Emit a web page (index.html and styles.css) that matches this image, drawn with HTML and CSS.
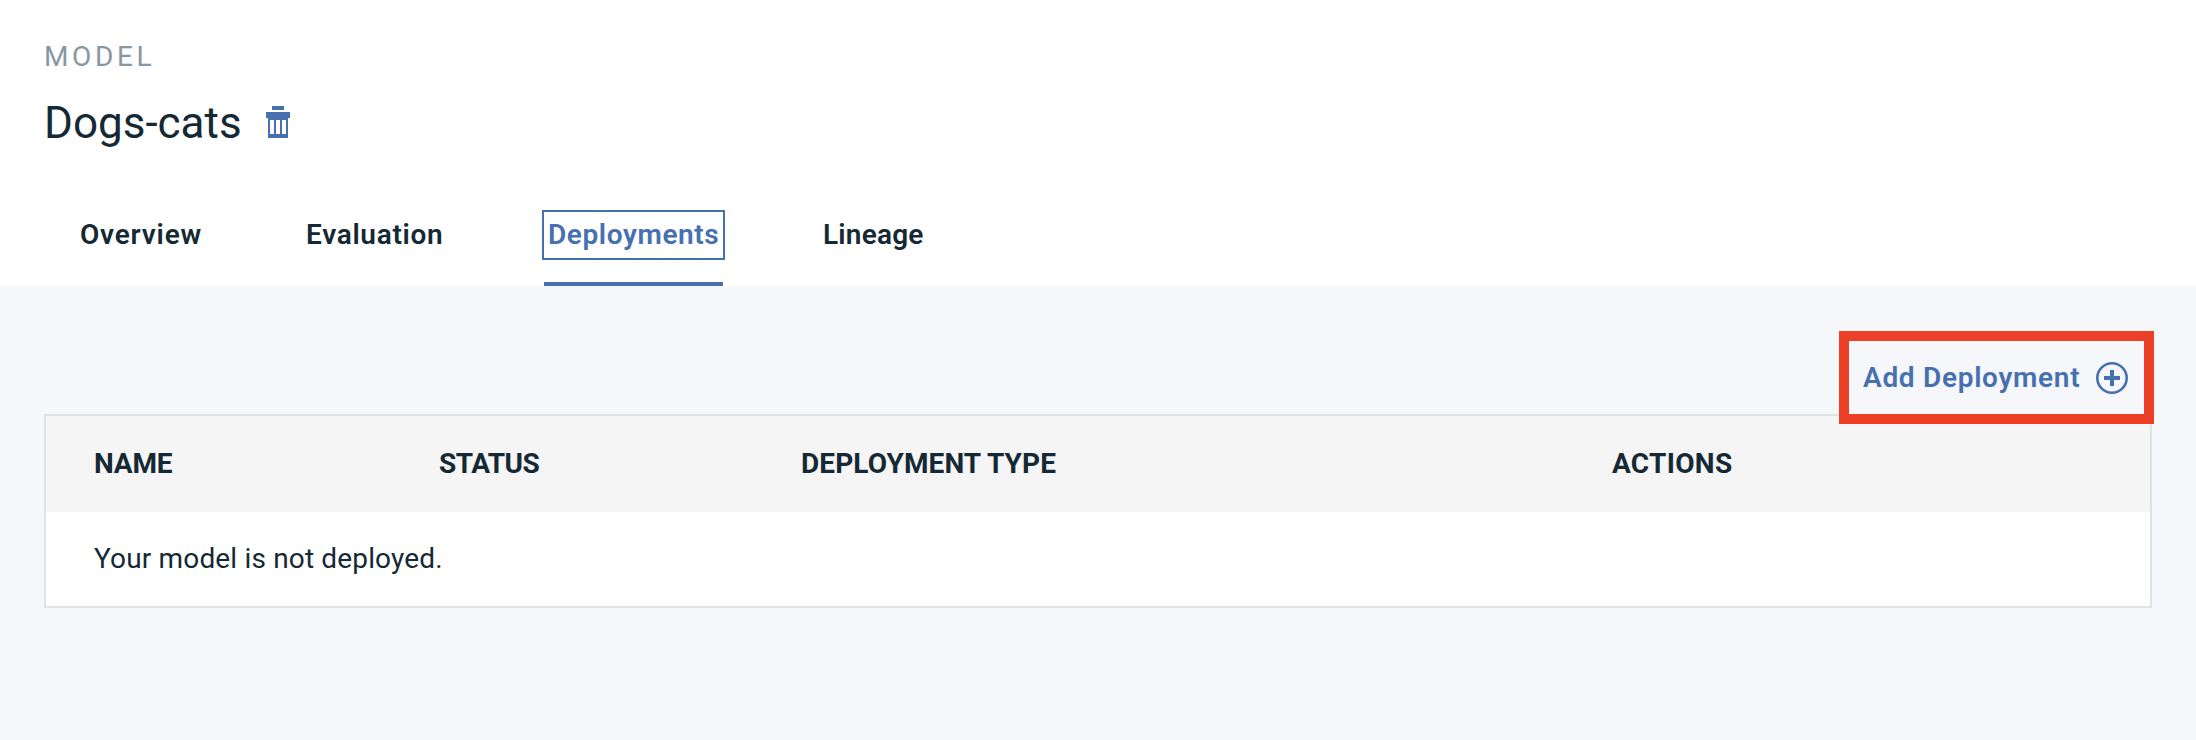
FILE: index.html
```html
<!DOCTYPE html>
<html lang="en">
<head>
<meta charset="utf-8">
<title>Dogs-cats</title>
<link rel="stylesheet" href="styles.css">
</head>
<body>
<header class="header">
  <div class="eyebrow">MODEL</div>
  <div class="title-row">
    <h1 class="title">Dogs-cats</h1>
    <svg class="trash" width="24" height="32" viewBox="0 0 24 32" fill="currentColor" shape-rendering="crispEdges"><path fill-rule="evenodd" d="M6 0h12v4H6zM0 6h24v6h-2v20H2V12H0zM4 14v14h4V14zM10 14v14h4V14zM16 14v14h4V14z"/></svg>
  </div>
  <nav class="tabs">
    <a class="tab tab-overview"><span class="tab-label">Overview</span></a>
    <a class="tab tab-evaluation"><span class="tab-label">Evaluation</span></a>
    <a class="tab tab-deployments active"><span class="tab-label">Deployments</span></a>
    <a class="tab tab-lineage"><span class="tab-label">Lineage</span></a>
  </nav>
</header>
<main class="content">
  <div class="toolbar">
    <button class="add"><span class="add-label">Add Deployment</span>
      <svg width="32" height="32" viewBox="0 0 32 32" fill="none" stroke="currentColor"><circle cx="16" cy="16" r="14.7" stroke-width="2.6"/><path d="M8 16h16M16 8v16" stroke-width="4"/></svg>
    </button>
  </div>
  <section class="table">
    <div class="row head">
      <span class="c-name">NAME</span><span class="c-status">STATUS</span><span class="c-type">DEPLOYMENT TYPE</span><span class="c-actions">ACTIONS</span>
    </div>
    <div class="row empty"><span class="message">Your model is not deployed.</span></div>
  </section>
</main>
</body>
</html>
```
FILE: styles.css
```css
* { box-sizing: border-box; }
body {
  margin: 0;
  min-height: 740px;
  background: #f5f7fb;
  color: #152935;
  font-family: "Roboto", "Liberation Sans", sans-serif;
  font-size: 28px;
  line-height: 36px;
  white-space: nowrap;
}
.header { height: 286px; padding: 39px 44px 0; background: #fff; }
.eyebrow { height: 36px; color: #8897a2; letter-spacing: 3.6px; }
.title-row { display: flex; align-items: center; height: 56px; margin-top: 20px; }
.title { width: 222px; margin: 0; font-size: 44px; font-weight: 400; line-height: 56px; }
.trash { margin-top: -2px; color: #4670b0; }
.tabs { display: flex; height: 76px; margin: 59px 0 0 36px; }
.tab { height: 76px; font-weight: 600; }
.tab-label { display: block; height: 50px; padding: 7px 0; letter-spacing: 0.6px; }
.tab-overview { width: 226px; }
.tab-overview .tab-label { letter-spacing: 0.8px; }
.tab-evaluation { width: 238px; }
.tab-evaluation .tab-label { letter-spacing: 0.7px; }
.tab-deployments { width: 179px; margin-right: 100px; }
.tab-lineage .tab-label { letter-spacing: 0.2px; }
.active { color: #4670b0; border-bottom: 4px solid #4670b0; }
.active .tab-label { margin: 0 -2px; padding: 5px 4px; border: 2px solid #4670b0; }
.content { padding: 45px 44px 0; }
.toolbar { display: flex; justify-content: flex-end; margin-right: -2px; }
.add {
  position: relative;
  display: flex;
  align-items: center;
  justify-content: space-between;
  width: 315px;
  height: 93px;
  padding: 0 16px 0 14px;
  border: 10px solid #ec4026;
  background: #f5f7fb;
  color: #4670b0;
  font: inherit;
  font-weight: 600;
  letter-spacing: 0.7px;
}
.table { height: 194px; margin-top: -10px; border: 2px solid #dfe3e6; background: #fff; }
.row { display: flex; align-items: center; padding-left: 48px; }
.head { height: 96px; padding-top: 2px; border-bottom: 2px solid #f2f3f3; background: #f5f5f5; font-weight: 700; }
.c-name { width: 345px; letter-spacing: -0.2px; }
.c-status { width: 362px; letter-spacing: -0.5px; }
.c-type { width: 811px; letter-spacing: 0.1px; }
.c-actions { letter-spacing: 0.3px; }
.empty { height: 94px; }
.message { letter-spacing: 0.16px; }
```
